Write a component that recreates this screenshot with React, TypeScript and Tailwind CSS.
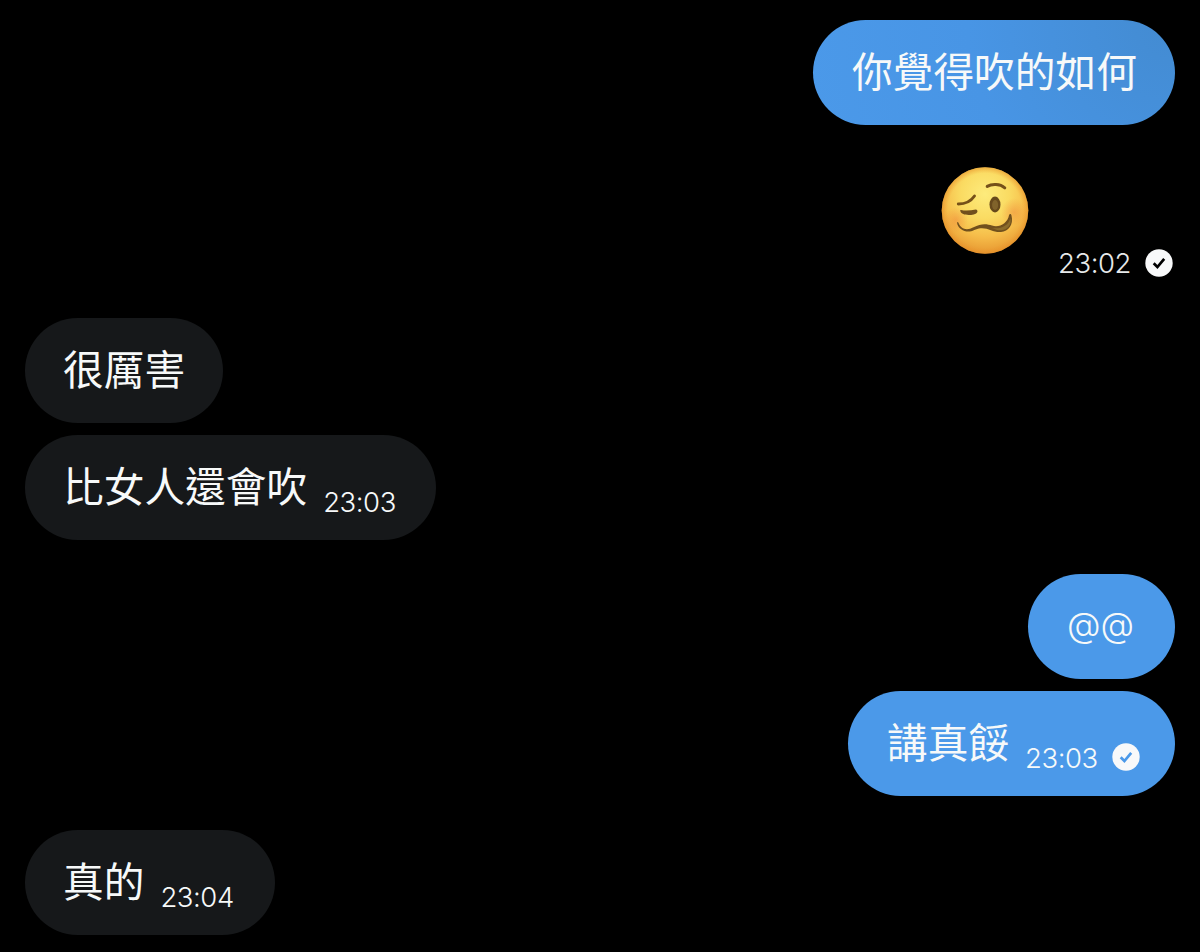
import type { ReactNode } from 'react';

const CJK = "pt-5 text-[40.7px] leading-[60px] font-['Noto_Sans_CJK_TC','Noto_Sans_CJK_SC',sans-serif]";
const LATIN = "pt-[21px] text-[34.5px] leading-[60px] font-[350] tracking-[0px] font-['Inter',sans-serif]";

function Check({ mark }: { mark: string }) {
  return (
    <svg viewBox="0 0 28 28" className="block h-7 w-7 shrink-0">
      <circle cx="14" cy="14" r="13.7" fill="#f8f9fa" />
      <path d="M8.7 14.2 12.4 18 19.2 9.8" fill="none" stroke={mark} strokeWidth="2.7" />
    </svg>
  );
}

function Time({ children }: { children: ReactNode }) {
  return (
    <span className="block w-[74px] shrink-0 whitespace-nowrap font-['Inter',sans-serif] text-[27.5px] font-[360] leading-7 tracking-[-0.45px]">
      {children}
    </span>
  );
}

function Bubble({ text, time, own, shaded, check, latin, className }: {
  text: string;
  time?: string;
  own?: boolean;
  shaded?: boolean;
  check?: boolean;
  latin?: boolean;
  className: string;
}) {
  const fill = shaded
    ? 'bg-[radial-gradient(circle_at_100%_0%,#438bd1_0%,#4895e5_55%,#4b99e9_100%)]'
    : own ? 'bg-[#4b99e9]' : 'bg-[#16181a]';
  return (
    <div className={`flex h-[105px] shrink-0 rounded-[52.5px] text-[#f7f9f9] ${fill} ${own ? 'self-end pl-[39px]' : 'self-start pl-[38px]'} ${className}`}>
      <span className={`block whitespace-nowrap ${latin ? LATIN : CJK}`}>{text}</span>
      {time && <div className="ml-4 pt-[53px]"><Time>{time}</Time></div>}
      {check && <div className="ml-[13px] pt-[52px]"><Check mark="#4b99e9" /></div>}
    </div>
  );
}

function WoozyFace() {
  return (
    <svg viewBox="0 0 110 110" className="block h-[110px] w-[110px]">
      <defs>
        <radialGradient id="skin" cx="50%" cy="31%" r="70%">
          <stop offset="0" stopColor="#fdeb7c" />
          <stop offset=".4" stopColor="#fadb62" />
          <stop offset=".7" stopColor="#f6bd4a" />
          <stop offset="1" stopColor="#e6952f" />
        </radialGradient>
        <radialGradient id="edge">
          <stop offset=".86" stopColor="#ed962e" stopOpacity="0" />
          <stop offset="1" stopColor="#e38c25" stopOpacity=".55" />
        </radialGradient>
        <radialGradient id="blush">
          <stop offset="0" stopColor="#ee7934" stopOpacity=".4" />
          <stop offset="1" stopColor="#ee7934" stopOpacity="0" />
        </radialGradient>
      </defs>
      <circle cx="55" cy="55.5" r="43.3" fill="url(#skin)" />
      <circle cx="55" cy="55.5" r="43.3" fill="url(#edge)" />
      <ellipse cx="26" cy="65" rx="12" ry="13" fill="url(#blush)" />
      <ellipse cx="84" cy="57" rx="13" ry="14" fill="url(#blush)" />
      <path d="M57.2 31.4C62 28.6 70 28.8 74.8 32.8" fill="none" stroke="#755019" strokeWidth="3" strokeLinecap="round" />
      <path d="M28.3 49C35.5 49 41 46.2 44.5 41" fill="none" stroke="#755019" strokeWidth="2.9" strokeLinecap="round" />
      <path d="M31 55C36 56 41 55.4 45.8 54.4C48.7 55 47.7 58.6 43.7 59.4C37.5 60.8 31.5 59.6 30.5 56.6C30 55.4 30.2 55 31 55Z" fill="#71501d" />
      <ellipse cx="65" cy="49.5" rx="5.5" ry="7.9" fill="#66491c" />
      <ellipse cx="65.1" cy="50" rx="3" ry="5" fill="#80632b" />
      <path d="M28.3 67.5C31 74.5 37 75.8 43.5 72.3C51 68.2 57 68.8 62 70.6C69.5 72.8 77.5 68.5 79.1 60C79.6 58.4 81 58.6 81.5 60.4C83.8 69.7 78.3 76.2 71 77C63.5 77.8 58.5 72.5 50.5 73.2C45.5 73.6 42 77.3 36.4 76.5C31.2 75.6 27.3 71.5 27.1 68.1C27.1 66.9 27.9 66.4 28.3 67.5Z" fill="#71501d" />
      <path d="M62 73C69.5 74.5 78.5 71.3 80.3 63.3C82 69.5 77.7 74.7 71.5 75.3C67.3 75.6 65 74.3 62 73Z" fill="#8b6c2b" />
    </svg>
  );
}

export default function App() {
  return (
    <main className="flex h-[952px] w-[1200px] flex-col overflow-hidden bg-black px-[25px] pt-5">
      <Bubble text="你覺得吹的如何" own shaded className="w-[362px]" />
      <div className="mt-[30px] flex h-[130px] shrink-0 self-end pr-0.5">
        <WoozyFace />
        <div className="ml-[18px] flex items-start pt-[94px] text-[#e7e9ea]">
          <Time>23:02</Time>
          <div className="ml-[13px]"><Check mark="#000000" /></div>
        </div>
      </div>
      <Bubble text="很厲害" className="mt-[33px] w-[198px]" />
      <Bubble text="比女人還會吹" time="23:03" className="mt-3 w-[411px]" />
      <Bubble text="@@" own latin className="mt-[34px] w-[147px]" />
      <Bubble text="講真餒" time="23:03" own check className="mt-3 w-[327px]" />
      <Bubble text="真的" time="23:04" className="mt-[34px] w-[250px]" />
    </main>
  );
}
